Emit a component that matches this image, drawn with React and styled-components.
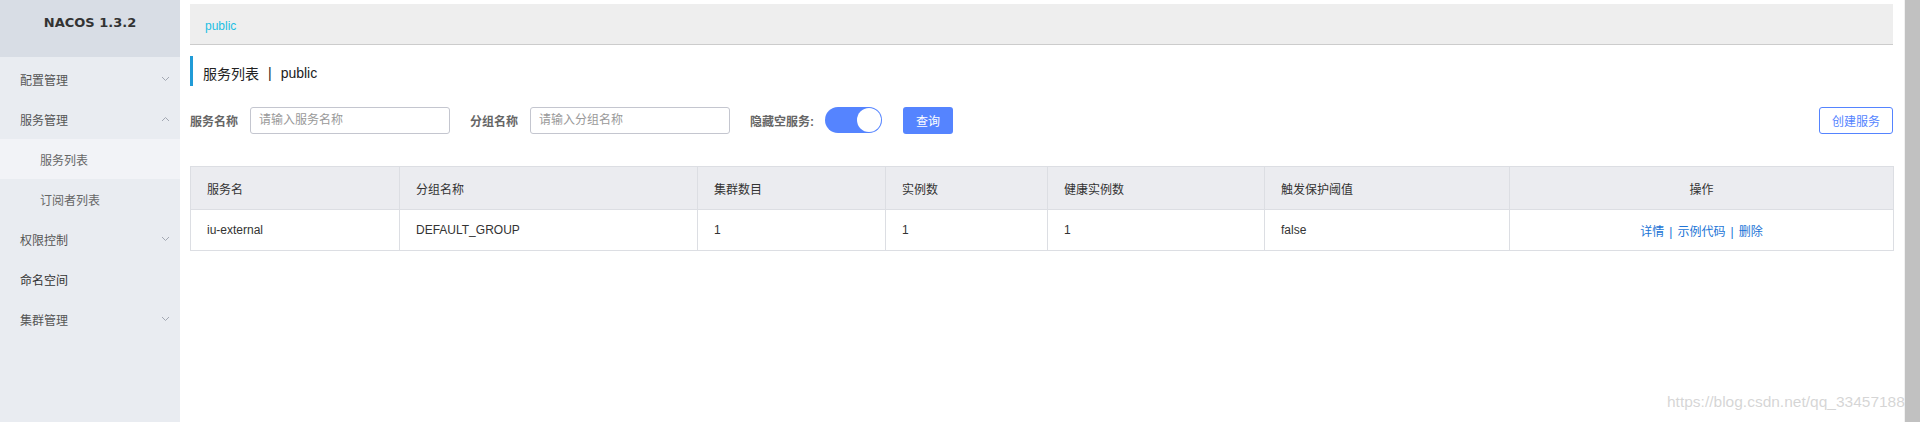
import React from 'react'
import styled, { createGlobalStyle } from 'styled-components'

const GlobalStyle = createGlobalStyle`
  html, body {
    margin: 0;
    padding: 0;
    background: #fff;
    font-family: "Liberation Sans", "Noto Sans CJK SC", sans-serif;
    font-size: 12px;
    color: #333;
  }
`

const menu = [
  { label: '配置管理', arrow: 'down' },
  { label: '服务管理', arrow: 'up' },
  { label: '服务列表', sub: true, active: true },
  { label: '订阅者列表', sub: true },
  { label: '权限控制', arrow: 'down' },
  { label: '命名空间', dark: true },
  { label: '集群管理', arrow: 'down' },
]

const columns = [
  { title: '服务名', width: 209 },
  { title: '分组名称', width: 298 },
  { title: '集群数目', width: 188 },
  { title: '实例数', width: 162 },
  { title: '健康实例数', width: 217 },
  { title: '触发保护阈值', width: 245 },
  { title: '操作', width: 384, center: true },
]

const rows = [
  { name: 'iu-external', group: 'DEFAULT_GROUP', clusters: 1, instances: 1, healthy: 1, threshold: 'false' },
]

const Chevron = ({ dir }) => (
  <svg width="9" height="6" viewBox="0 0 9 6">
    <polyline
      points={dir === 'up' ? '1,5 4.5,1.5 8,5' : '1,1 4.5,4.5 8,1'}
      fill="none"
      stroke="#a3a8b3"
      strokeWidth="1"
    />
  </svg>
)

export default function App() {
  return (
    <>
      <GlobalStyle />
      <Page>
        <Sidebar>
          <Logo>NACOS 1.3.2</Logo>
          <Menu>
            {menu.map((m) => (
              <MenuItem key={m.label} $sub={m.sub} $active={m.active} $dark={m.dark}>
                <span>{m.label}</span>
                {m.arrow && <Chevron dir={m.arrow} />}
              </MenuItem>
            ))}
          </Menu>
        </Sidebar>

        <Main>
          <NamespaceBar>
            <NamespaceLink>public</NamespaceLink>
          </NamespaceBar>

          <PageTitle>
            服务列表<TitleSep>|</TitleSep>public
          </PageTitle>

          <FilterRow>
            <Label>服务名称</Label>
            <Input placeholder="请输入服务名称" />
            <Label $ml={20}>分组名称</Label>
            <Input placeholder="请输入分组名称" />
            <Label $ml={20}>隐藏空服务:</Label>
            <Switch>
              <Knob />
            </Switch>
            <PrimaryButton>查询</PrimaryButton>
            <Spacer />
            <OutlineButton>创建服务</OutlineButton>
          </FilterRow>

          <Table>
            <colgroup>
              {columns.map((c) => (
                <col key={c.title} style={{ width: c.width }} />
              ))}
            </colgroup>
            <thead>
              <tr>
                {columns.map((c) => (
                  <Th key={c.title} $center={c.center}>{c.title}</Th>
                ))}
              </tr>
            </thead>
            <tbody>
              {rows.map((r) => (
                <tr key={r.name}>
                  <Td>{r.name}</Td>
                  <Td>{r.group}</Td>
                  <Td>{r.clusters}</Td>
                  <Td>{r.instances}</Td>
                  <Td>{r.healthy}</Td>
                  <Td>{r.threshold}</Td>
                  <Td $center>
                    <Link>详情</Link>
                    <LinkSep>|</LinkSep>
                    <Link>示例代码</Link>
                    <LinkSep>|</LinkSep>
                    <Link>删除</Link>
                  </Td>
                </tr>
              ))}
            </tbody>
          </Table>
        </Main>

        <ScrollTrack>
          <ScrollThumb />
        </ScrollTrack>

        <Watermark>https://blog.csdn.net/qq_33457188</Watermark>
      </Page>
    </>
  )
}

const Page = styled.div`
  position: relative;
  display: flex;
  height: 422px;
  overflow: hidden;
`

const Sidebar = styled.aside`
  width: 180px;
  flex-shrink: 0;
  background: #e9ecf1;
  display: flex;
  flex-direction: column;
`

const Logo = styled.div`
  height: 57px;
  background: #d8dde5;
  display: flex;
  align-items: center;
  justify-content: center;
  padding-bottom: 12px;
  box-sizing: border-box;
  font-family: "DejaVu Sans", sans-serif;
  font-weight: bold;
  font-size: 13px;
  color: #333;
`

const Menu = styled.nav`
  padding-top: 2px;
  display: flex;
  flex-direction: column;
`

const MenuItem = styled.div`
  height: 40px;
  display: flex;
  align-items: center;
  justify-content: space-between;
  padding: 0 ${(p) => (p.$sub ? '20px 0 40px' : '10px 0 20px')};
  background: ${(p) => (p.$active ? '#f2f3f7' : 'transparent')};
  color: ${(p) => (p.$dark ? '#333' : p.$sub ? '#666' : '#555')};
  font-size: 12px;
`

const Main = styled.main`
  flex: 1;
  min-width: 0;
  padding: 4px 11px 0 10px;
  display: flex;
  flex-direction: column;
`

const NamespaceBar = styled.div`
  height: 41px;
  background: #eeeeee;
  border-bottom: 1px solid #cccccc;
  box-sizing: border-box;
  display: flex;
  align-items: center;
  padding: 3px 0 0 15px;
`

const NamespaceLink = styled.span`
  color: #22bfe3;
  font-size: 12px;
`

const PageTitle = styled.div`
  margin-top: 11px;
  height: 30px;
  border-left: 3px solid #209bd7;
  padding: 4px 0 0 10px;
  box-sizing: border-box;
  display: flex;
  align-items: center;
  font-size: 14px;
  color: #222;
`

const TitleSep = styled.span`
  margin: 0 9px;
`

const FilterRow = styled.div`
  margin-top: 20px;
  height: 28px;
  display: flex;
  align-items: center;
`

const Label = styled.label`
  margin-left: ${(p) => p.$ml || 0}px;
  margin-right: 12px;
  font-size: 12px;
  font-weight: bold;
  color: #666;
`

const Input = styled.input`
  width: 200px;
  height: 27px;
  box-sizing: border-box;
  border: 1px solid #c4c6cf;
  border-radius: 3px;
  padding: 0 8px;
  font-family: inherit;
  font-size: 12px;
  outline: none;
  &::placeholder {
    color: #999;
  }
`

const Switch = styled.div`
  width: 57px;
  height: 26px;
  border-radius: 13px;
  background: #5584ff;
  display: flex;
  justify-content: flex-end;
  align-items: center;
  padding: 1px;
  box-sizing: border-box;
  margin-left: -1px;
`

const Knob = styled.div`
  width: 24px;
  height: 24px;
  border-radius: 50%;
  background: #fff;
`

const PrimaryButton = styled.button`
  margin-left: 21px;
  width: 50px;
  height: 27px;
  border: none;
  border-radius: 3px;
  background: #5584ff;
  color: #fff;
  font-family: inherit;
  font-size: 12px;
  padding: 0;
`

const Spacer = styled.div`
  flex: 1;
`

const OutlineButton = styled.button`
  width: 74px;
  height: 27px;
  border: 1px solid #5584ff;
  border-radius: 3px;
  background: #fff;
  color: #5584ff;
  font-family: inherit;
  font-size: 12px;
  padding: 0;
`

const Table = styled.table`
  margin-top: 32px;
  width: 100%;
  border-collapse: collapse;
  table-layout: fixed;
  border: 1px solid #dcdee3;
`

const Th = styled.th`
  height: 42px;
  background: #ebecf0;
  border: 1px solid #dcdee3;
  padding: 0 16px;
  text-align: ${(p) => (p.$center ? 'center' : 'left')};
  font-weight: normal;
  font-size: 12px;
  color: #333;
`

const Td = styled.td`
  height: 40px;
  border: 1px solid #dcdee3;
  padding: 0 16px;
  text-align: ${(p) => (p.$center ? 'center' : 'left')};
  font-size: 12px;
  color: #333;
`

const Link = styled.a`
  color: #2174d6;
  cursor: pointer;
`

const LinkSep = styled.span`
  color: #2174d6;
  margin: 0 5px;
`

const ScrollTrack = styled.div`
  width: 16px;
  flex-shrink: 0;
  background: #f1f1f1;
  display: flex;
  padding-left: 1px;
  box-sizing: border-box;
`

const ScrollThumb = styled.div`
  flex: 1;
  background: #c1c1c1;
`

const Watermark = styled.div`
  position: absolute;
  left: 1667px;
  top: 393px;
  font-family: "Liberation Sans", sans-serif;
  font-size: 15.5px;
  color: rgba(200, 200, 200, 0.75);
  white-space: nowrap;
`
